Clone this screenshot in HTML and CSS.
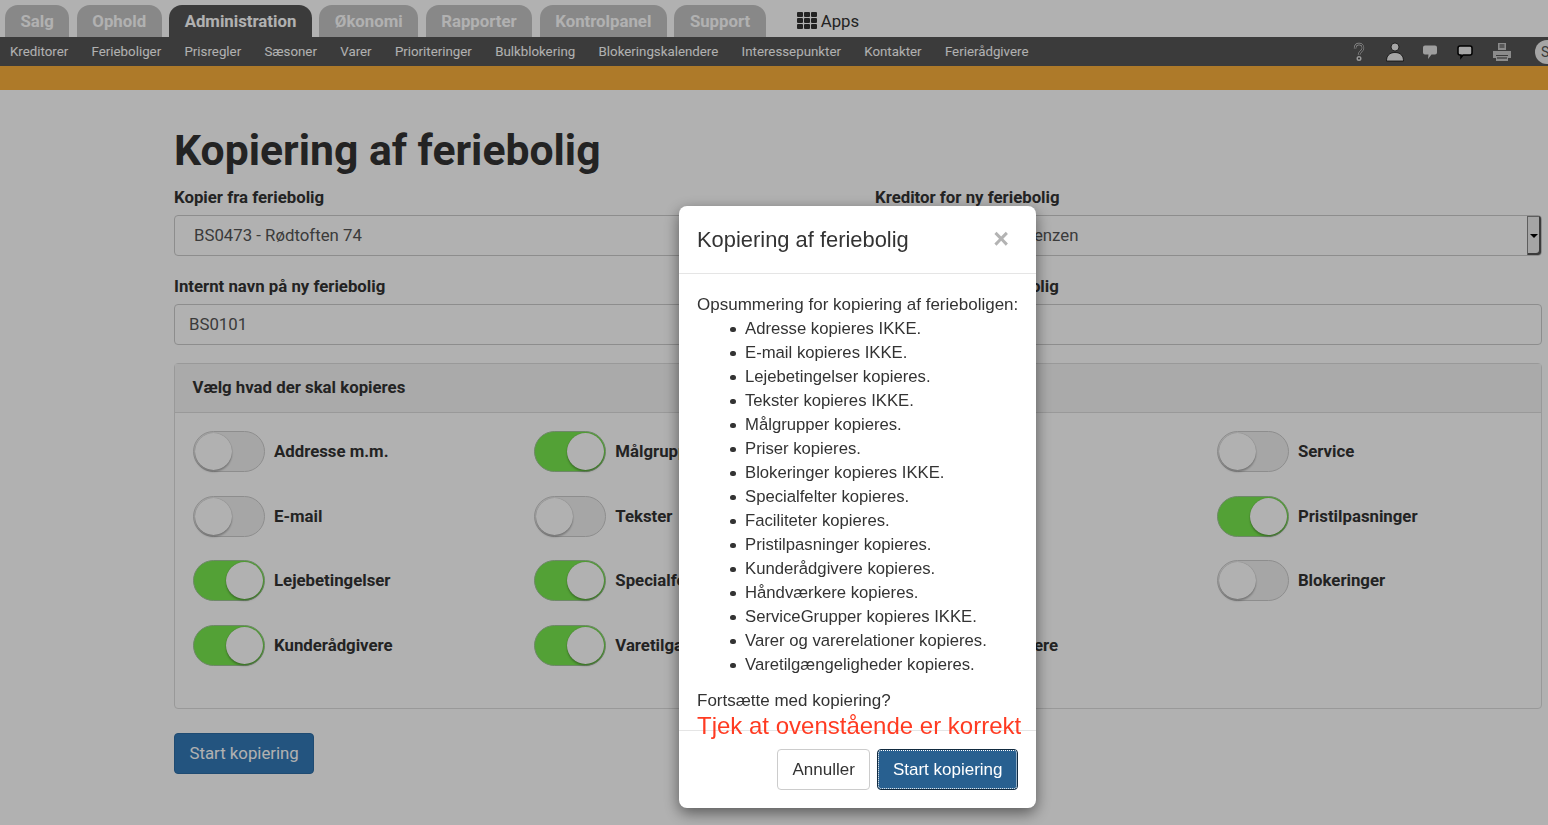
FILE: index.html
```html
<!DOCTYPE html>
<html lang="da">
<head>
<meta charset="utf-8">
<title>Kopiering af feriebolig</title>
<link rel="stylesheet" href="styles.css">
</head>
<body>
<header class="top">
  <nav class="tabs">
    <a class="tab">Salg</a>
    <a class="tab">Ophold</a>
    <a class="tab active">Administration</a>
    <a class="tab">Økonomi</a>
    <a class="tab">Rapporter</a>
    <a class="tab">Kontrolpanel</a>
    <a class="tab">Support</a>
    <a class="apps">
      <svg class="apps-icon" viewBox="0 0 20 17" width="20" height="17"><g fill="#333"><rect x="0" y="0" width="6" height="5" rx="1"/><rect x="7" y="0" width="6" height="5" rx="1"/><rect x="14" y="0" width="6" height="5" rx="1"/><rect x="0" y="6" width="6" height="5" rx="1"/><rect x="7" y="6" width="6" height="5" rx="1"/><rect x="14" y="6" width="6" height="5" rx="1"/><rect x="0" y="12" width="6" height="5" rx="1"/><rect x="7" y="12" width="6" height="5" rx="1"/><rect x="14" y="12" width="6" height="5" rx="1"/></g></svg>
      Apps
    </a>
  </nav>
  <div class="subnav">
    <nav class="sublinks">
      <a>Kreditorer</a><a>Ferieboliger</a><a>Prisregler</a><a>Sæsoner</a><a>Varer</a><a>Prioriteringer</a><a>Bulkblokering</a><a>Blokeringskalendere</a><a>Interessepunkter</a><a>Kontakter</a><a>Ferierådgivere</a>
    </nav>
    <div class="tools">
      <svg class="tool" width="14" height="20" viewBox="0 0 14 20"><g fill="none" stroke="#ddd" stroke-width="2.400"><path d="M3 6.500C3 3.500 4.800 2 7 2s4 1.500 4 4c0 2.200-1.600 3-2.600 4C7.500 10.900 7 11.600 7 13"/><circle cx="7" cy="16.500" r="1.600" stroke-width="1.800"/></g><path d="M3 6.500C3 3.500 4.800 2 7 2s4 1.500 4 4c0 2.200-1.600 3-2.600 4C7.500 10.900 7 11.600 7 13" fill="none" stroke="#444" stroke-width="1.200"/><circle cx="7" cy="16.500" r="1" fill="#444"/></svg>
      <svg class="tool person" width="18" height="20" viewBox="0 0 18 20"><circle cx="9" cy="5" r="4" fill="#eee" stroke="#111" stroke-width=".8"/><path d="M.5 19c0-5 2.800-8.500 8.500-8.500s8.500 3.500 8.500 8.500z" fill="#eee" stroke="#111" stroke-width=".8"/></svg>
      <svg class="tool" width="16" height="16" viewBox="0 0 16 16"><path d="M3 1.500h10a2 2 0 0 1 2 2v5a2 2 0 0 1-2 2H9.500L6 15l.5-4.500H3a2 2 0 0 1-2-2v-5a2 2 0 0 1 2-2z" fill="#e4e4e4"/></svg>
      <svg class="tool" width="16" height="16" viewBox="0 0 16 16"><path d="M3 2h10a2 2 0 0 1 2 2v5a2 2 0 0 1-2 2H6l-2 2.500V11H3a2 2 0 0 1-2-2V4a2 2 0 0 1 2-2z" fill="#f0f0f0" stroke="#000" stroke-width="1.500"/></svg>
      <svg class="tool" width="20" height="20" viewBox="0 0 20 20"><g fill="#c8c8c8"><path d="M6 1h8v7H6z"/><path d="M1 9h18v7h-3v-3H4v3H1z"/><path d="M4 14h12v5H4z"/></g><path d="M7.500 3h5M7.500 5h5M5 16h10" stroke="#3a3a3a" stroke-width="1"/></svg>
      <span class="avatar">S</span>
    </div>
  </div>
  <div class="stripe"></div>
</header>

<main class="page">
  <h1>Kopiering af feriebolig</h1>
  <div class="fields">
    <div class="field">
      <label>Kopier fra feriebolig</label>
      <div class="input select-like">BS0473 - Rødtoften 74</div>
    </div>
    <div class="field">
      <label>Kreditor for ny feriebolig</label>
      <div class="input select-like">KR0012 - Hans Lorenzen<span class="arrow"></span></div>
    </div>
    <div class="field">
      <label>Internt navn på ny feriebolig</label>
      <div class="input">BS0101</div>
    </div>
    <div class="field">
      <label>Ekstern navn på ny bolig</label>
      <div class="input"></div>
    </div>
  </div>

  <section class="panel">
    <div class="panel-head">Vælg hvad der skal kopieres</div>
    <div class="switches">
      <div class="sw"><span class="toggle"></span>Addresse m.m.</div>
      <div class="sw"><span class="toggle on"></span>Målgrupper</div>
      <div class="sw"><span class="toggle on"></span>Priser</div>
      <div class="sw"><span class="toggle"></span>Service</div>
      <div class="sw"><span class="toggle"></span>E-mail</div>
      <div class="sw"><span class="toggle"></span>Tekster</div>
      <div class="sw"><span class="toggle on"></span>Faciliteter</div>
      <div class="sw"><span class="toggle on"></span>Pristilpasninger</div>
      <div class="sw"><span class="toggle on"></span>Lejebetingelser</div>
      <div class="sw"><span class="toggle on"></span>Specialfelter</div>
      <div class="sw"><span class="toggle on"></span>Varer</div>
      <div class="sw"><span class="toggle"></span>Blokeringer</div>
      <div class="sw"><span class="toggle on"></span>Kunderådgivere</div>
      <div class="sw"><span class="toggle on"></span>Varetilgængeligheder</div>
      <div class="sw"><span class="toggle on"></span>Håndværkere</div>
    </div>
  </section>

  <button class="btn primary start">Start kopiering</button>
</main>

<div class="backdrop"></div>

<div class="modal">
  <div class="modal-head">
    <h4>Kopiering af feriebolig</h4>
    <span class="close">×</span>
  </div>
  <div class="modal-body">
    <div>Opsummering for kopiering af ferieboligen:</div>
    <ul>
      <li>Adresse kopieres IKKE.</li>
      <li>E-mail kopieres IKKE.</li>
      <li>Lejebetingelser kopieres.</li>
      <li>Tekster kopieres IKKE.</li>
      <li>Målgrupper kopieres.</li>
      <li>Priser kopieres.</li>
      <li>Blokeringer kopieres IKKE.</li>
      <li>Specialfelter kopieres.</li>
      <li>Faciliteter kopieres.</li>
      <li>Pristilpasninger kopieres.</li>
      <li>Kunderådgivere kopieres.</li>
      <li>Håndværkere kopieres.</li>
      <li>ServiceGrupper kopieres IKKE.</li>
      <li>Varer og varerelationer kopieres.</li>
      <li>Varetilgængeligheder kopieres.</li>
    </ul>
    <div>Fortsætte med kopiering?</div>
    <div class="warn">Tjek at ovenstående er korrekt</div>
  </div>
  <div class="modal-foot">
    <button class="btn plain">Annuller</button>
    <button class="btn primary focus">Start kopiering</button>
  </div>
</div>
</body>
</html>
```
FILE: styles.css
```css
* { box-sizing: border-box; }
html, body { margin: 0; height: 100%; overflow: hidden; }
body { background: #fff; color: #333; font: 16.800px/24px Roboto, "Liberation Sans", sans-serif; }

.tabs { display: flex; gap: 7.500px; height: 37px; padding: 5px 0 0 5px; }
.tab { display: block; height: 32px; padding: 0 15.500px; border-radius: 13px 13px 0 0; background: #c4c4c4; color: #fff; font-weight: 700; line-height: 33px; white-space: nowrap; }
.tab.active { background: #565656; color: #fff; }
.apps { display: flex; align-items: center; gap: 4px; margin-left: 23.500px; height: 32px; color: #333; }
.apps-icon { margin-bottom: 2px; }

.subnav { display: flex; align-items: center; justify-content: space-between; height: 29px; background: #565656; padding-left: 10px; overflow: hidden; }
.sublinks { display: flex; gap: 23.300px; font-size: 13.300px; color: #fff; white-space: nowrap; }
.tools { display: flex; align-items: center; gap: 19px; margin-right: -11px; }
.tool { display: block; }
.person { margin: 0 -1px 0 1px; }
.avatar { width: 24px; height: 24px; border-radius: 50%; background: #eee; color: #555; font-size: 14px; line-height: 24px; padding-left: 6px; overflow: hidden; margin-left: 4px; }
.stripe { height: 24px; background: #fbb03b; }

.page { padding: 0 6px 0 174px; }
h1 { margin: 0; padding-top: 33px; font-size: 42.700px; line-height: 54px; font-weight: 700; color: #333; height: 95px; white-space: nowrap; }
.fields { display: grid; grid-template-columns: 683px 667px; column-gap: 18px; row-gap: 18px; }
.field label { display: block; font-weight: 700; line-height: 24px; height: 30px; }
.input { height: 41px; border: 1px solid #ccc; border-radius: 4px; padding: 0 14px; line-height: 39px; color: #555; background: #fff; position: relative; }
.select-like { padding-left: 19px; }
.arrow { position: absolute; right: 0; top: 0; width: 14px; height: 39px; background: #eee; border-left: 1px solid #888; border-radius: 0 3px 3px 0; box-shadow: inset -2px -2px 0 #555, inset 0 1px 0 #888; }
.arrow::after { content: ""; position: absolute; left: 2px; top: 18px; border: 4px solid transparent; border-top: 4px solid #000; border-bottom: 0; }

.panel { margin-top: 18px; height: 346px; border: 1px solid #ddd; border-radius: 4px; }
.panel-head { height: 49px; padding: 0 17.500px; background: #f5f5f5; border-bottom: 1px solid #ddd; font-weight: 700; line-height: 46px; }
.switches { display: grid; grid-template-columns: repeat(4, 341.300px); grid-auto-rows: 64.500px; padding: 18px 0 0 18px; }
.sw { display: flex; align-items: flex-start; gap: 9px; font-weight: 700; line-height: 41px; white-space: nowrap; }
.toggle { position: relative; flex: none; width: 72px; height: 41px; border: 1px solid #ccc; border-radius: 21px; background: #f0f0f0; }
.toggle::after { content: ""; position: absolute; left: 1px; top: 1px; width: 37px; height: 37px; border-radius: 50%; background: #fff; box-shadow: 0 2px 2px rgba(0,0,0,.25), 0 0 1px rgba(0,0,0,.3); }
.toggle.on { background: #78e84e; border-color: #9fc596; }
.toggle.on::after { left: auto; right: 1px; }

.btn { font: 17px/24px "Liberation Sans", Arial, sans-serif; border-radius: 4px; height: 41px; padding: 0 14.500px; }
.primary { background: #337ab7; border: 1px solid #2e6da4; color: #fff; }
.start { display: block; margin-top: 24px; font-family: Roboto, sans-serif; font-size: 16.800px; padding-bottom: 2px; }

.backdrop { position: fixed; inset: 0; background: rgba(0,0,0,.305); }

.modal { position: fixed; left: 679px; top: 206px; width: 357px; height: 602px; background: #fff; border-radius: 8px; box-shadow: 0 5px 15px rgba(0,0,0,.5); font-family: "Liberation Sans", Arial, sans-serif; color: #333; }
.modal-head { display: flex; justify-content: space-between; align-items: center; height: 68px; padding: 0 18px; border-bottom: 1px solid #e5e5e5; }
.modal-head h4 { margin: 0; font-size: 21.900px; font-weight: 400; line-height: 70px; color: #333; }
.close { font: 700 27px/1 "Liberation Sans", sans-serif; color: #b3b3b3; margin-right: 9px; }
.modal-body { padding: 19px 18px 0; font-size: 17px; line-height: 24px; height: 456px; white-space: nowrap; }
.modal-body ul { margin: 0 0 12px; padding-left: 48px; list-style: none; }
.modal-body li { position: relative; font-size: 16.700px; }
.modal-body li::before { content: ""; position: absolute; left: -15px; top: 9.500px; width: 5.500px; height: 5.500px; border-radius: 50%; background: #333; }
.warn { color: #ff3b22; font-size: 24px; line-height: 28px; margin-top: -1px; }
.modal-foot { display: flex; justify-content: flex-end; gap: 7px; padding: 18px 18px 0; border-top: 1px solid #e5e5e5; }
.plain { background: #fff; border: 1px solid #ccc; color: #333; }
.focus { background: #286090; border-color: #122b40; outline: 1px dotted #fff; outline-offset: -2px; }
```
